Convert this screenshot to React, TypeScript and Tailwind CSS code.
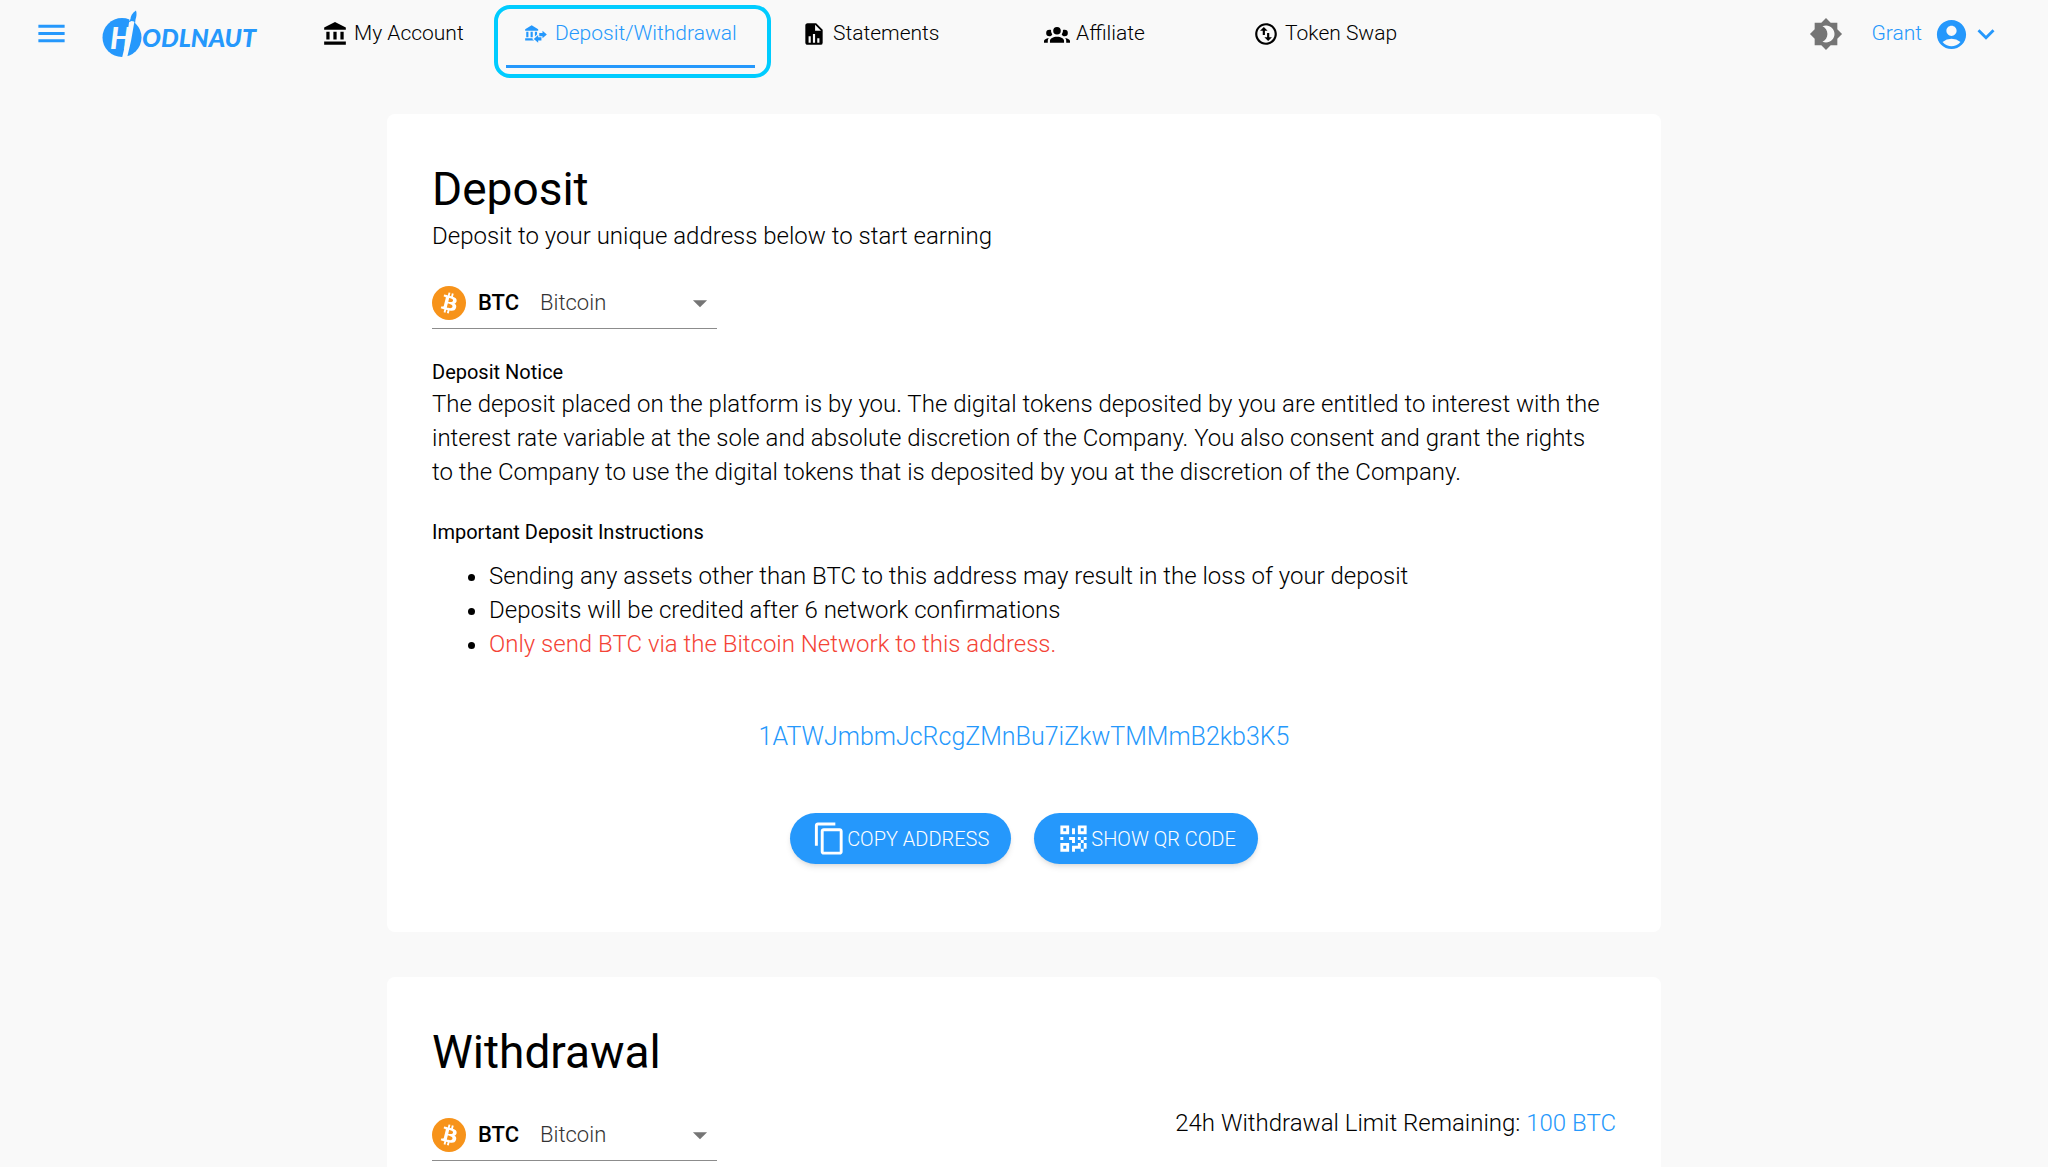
import type { ReactNode } from 'react';
import {
  MdAccountBalance,
  MdAccountCircle,
  MdArrowDropDown,
  MdBrightness4,
  MdContentCopy,
  MdExpandMore,
  MdMenu,
} from 'react-icons/md';

const iconPaths = {
  transfer:
    'M15,14V11H18V9L22,12.5L18,16V14H15M14,7.7V9H2V7.7L8,4L14,7.7M7,10H9V15H7V10M3,10H5V15H3V10M13,10V12.5L11,14.3V10H13M9.1,16L8.5,16.5L10.2,18H2V16H9.1M17,15V18H14V20L10,16.5L14,13V15H17Z',
  fileChart:
    'M13,9H18.5L13,3.5V9M6,2H14L20,8V20A2,2 0 0,1 18,22H6C4.89,22 4,21.1 4,20V4C4,2.89 4.89,2 6,2M7,20H9V14H7V20M11,20H13V12H11V20M15,20H17V16H15V20Z',
  group:
    'M12,5.5A3.5,3.5 0 0,1 15.5,9A3.5,3.5 0 0,1 12,12.5A3.5,3.5 0 0,1 8.5,9A3.5,3.5 0 0,1 12,5.5M5,8C5.56,8 6.08,8.15 6.53,8.42C6.38,9.85 6.8,11.27 7.66,12.38C7.16,13.34 6.16,14 5,14A3,3 0 0,1 2,11A3,3 0 0,1 5,8M19,8A3,3 0 0,1 22,11A3,3 0 0,1 19,14C17.84,14 16.84,13.34 16.34,12.38C17.2,11.27 17.62,9.85 17.47,8.42C17.92,8.15 18.44,8 19,8M5.5,18.25C5.5,16.18 8.41,14.5 12,14.5C15.59,14.5 18.5,16.18 18.5,18.25V20H5.5V18.25M0,20V18.5C0,17.11 1.89,15.94 4.45,15.6C3.86,16.28 3.5,17.22 3.5,18.25V20H0M24,20H20.5V18.25C20.5,17.22 20.14,16.28 19.55,15.6C22.11,15.94 24,17.11 24,18.5V20Z',
  swap: 'M12 2C6.48 2 2 6.48 2 12s4.48 10 10 10 10-4.48 10-10S17.52 2 12 2zm0 18c-4.41 0-8-3.59-8-8s3.59-8 8-8 8 3.59 8 8-3.59 8-8 8zM6.5 9L10 5.5 13.5 9H11v4H9V9H6.5zm11 6L14 18.5 10.5 15H13v-4h2v4h2.5z',
  qr: 'M3,11H5V13H3V11M11,5H13V9H11V5M9,11H13V15H11V13H9V11M15,11H17V13H19V11H21V13H19V15H21V19H19V21H17V19H13V21H11V17H15V15H17V13H15V11M19,19V15H17V19H19M15,3H21V9H15V3M17,5V7H19V5H17M3,3H9V9H3V3M5,5V7H7V5H5M3,15H9V21H3V15M5,17V19H7V17H5Z',
};

function Icon({ d, size = 26 }: { d: string; size?: number }) {
  return (
    <svg className="shrink-0" width={size} height={size} viewBox="0 0 24 24" fill="currentColor" aria-hidden="true">
      <path d={d} />
    </svg>
  );
}

const navLinks = [
  { label: 'My Account', href: '#account', width: 'w-[201px]', icon: <MdAccountBalance size={26} /> },
  { label: 'Deposit/Withdrawal', href: '#deposit', width: 'w-[278px]', icon: <Icon d={iconPaths.transfer} />, active: true },
  { label: 'Statements', href: '#statements', width: 'w-[243px]', icon: <Icon d={iconPaths.fileChart} /> },
  { label: 'Affiliate', href: '#affiliate', width: 'w-[209px]', icon: <Icon d={iconPaths.group} /> },
  { label: 'Token Swap', href: '#swap', width: 'w-[200px]', icon: <Icon d={iconPaths.swap} /> },
];

function Logo() {
  return (
    <svg width="160" height="52" viewBox="0 0 160 52" role="img" aria-label="Hodlnaut">
      <circle cx="20" cy="29.5" r="19.5" fill="#2598fc" />
      <text x="8" y="41" fontSize="30" fontWeight="900" fontStyle="italic" fontFamily="Lato, sans-serif" fill="#f9f9f9">
        H
      </text>
      {/* exhaust trail and rocket */}
      <path d="M20 50 L25 29 L27.500 11 L32.500 13 L29 33 L25 50 Z" fill="#f9f9f9" />
      <path d="M34 2.500 C30 5 28.500 8.500 28.500 11 L26.500 14.500 L29.500 13 L32 13.500 L33 16 L33.500 11.500 C34.500 8.500 35 5.500 34 2.500 Z" fill="#2598fc" />
      <text x="40" y="39" fontSize="25" fontWeight="900" fontStyle="italic" fontFamily="Lato, sans-serif" fill="#2598fc">
        ODLNAUT
      </text>
    </svg>
  );
}

function Header() {
  return (
    <header className="flex h-[68px] items-start px-[34px]">
      <button className="mt-4 text-[#2598fc]" aria-label="Open menu">
        <MdMenu size={35} />
      </button>
      <a href="#home" className="ml-[33px] mt-2">
        <Logo />
      </a>
      <nav className="ml-[43px] flex h-full">
        {navLinks.map((link) => (
          <div key={link.label} className={`relative h-full ${link.width}`}>
            <a
              href={link.href}
              className={`flex h-full items-start gap-1.5 pl-[17px] pt-5 text-[21px] font-light leading-[26px] ${
                link.active ? 'mr-[29px] border-b-3 border-[#2598fc] text-[#2598fc]' : 'text-black'
              }`}
            >
              <span className="mt-px">{link.icon}</span>
              {link.label}
            </a>
            {link.active && (
              <span className="pointer-events-none absolute -left-3 top-[5px] h-[73px] w-[277px] rounded-2xl border-4 border-[#00ccff]" />
            )}
          </div>
        ))}
      </nav>
      <div className="ml-auto mr-[11px] flex h-[68px] items-center text-[21px] font-light text-[#2598fc]">
        <button className="mr-7 text-[#757575]" aria-label="Toggle theme">
          <MdBrightness4 size={34} />
        </button>
        <button className="flex items-center">
          Grant
          <MdAccountCircle size={35} className="ml-3" />
          <MdExpandMore size={34} />
        </button>
      </div>
    </header>
  );
}

function CoinSelect({ id }: { id: string }) {
  return (
    <div className="relative flex h-[43px] w-[285px] items-start border-b border-[#8c8c8c] text-[22px] leading-[34px]">
      <svg width="34" height="34" viewBox="0 0 32 32" aria-hidden="true">
        <circle cx="16" cy="16" r="16" fill="#f7931a" />
        <path
          fill="#fff"
          d="M23.189 14.02c.314-2.096-1.283-3.223-3.465-3.975l.708-2.84-1.728-.43-.69 2.765c-.454-.114-.92-.22-1.385-.326l.695-2.783L15.596 6l-.708 2.839c-.376-.086-.746-.17-1.104-.26l.002-.009-2.384-.595-.46 1.846s1.283.294 1.256.312c.7.175.826.638.805 1.006l-.806 3.235c.048.012.11.03.18.057l-.183-.045-1.13 4.532c-.086.212-.303.531-.793.41.018.025-1.256-.313-1.256-.313l-.858 1.978 2.25.561c.418.105.828.215 1.231.318l-.715 2.872 1.727.43.708-2.84c.472.127.93.245 1.378.357l-.706 2.828 1.728.43.715-2.866c2.948.558 5.164.333 6.097-2.333.752-2.146-.037-3.385-1.588-4.192 1.13-.26 1.98-1.003 2.207-2.538zm-3.95 5.538c-.533 2.147-4.148.986-5.32.695l.95-3.805c1.172.293 4.929.872 4.37 3.11zm.535-5.569c-.487 1.953-3.495.96-4.47.717l.86-3.45c.975.243 4.118.696 3.61 2.733z"
        />
      </svg>
      <label htmlFor={id} className="ml-3 w-[62px] font-medium">
        BTC
      </label>
      <select id={id} className="h-[34px] flex-1 appearance-none bg-transparent font-light text-[#333]">
        <option>Bitcoin</option>
      </select>
      <MdArrowDropDown size={34} className="pointer-events-none absolute right-0 top-0 text-[#757575]" />
    </div>
  );
}

function Card({ title, children }: { title: string; children: ReactNode }) {
  return (
    <section className="rounded-lg bg-white px-[45px] pb-[68px] pt-[45px]">
      <h1 className="text-[46px] leading-[60px]">{title}</h1>
      {children}
    </section>
  );
}

function PillButton({ icon, children }: { icon: ReactNode; children: ReactNode }) {
  return (
    <button className="flex h-[51px] items-center rounded-full bg-[#2598fc] px-[22px] text-[20px] font-light text-white shadow-md">
      {icon}
      {children}
    </button>
  );
}

export default function App() {
  return (
    <div className="min-h-screen bg-[#f9f9f9] font-[Roboto,sans-serif] text-black">
      <Header />
      <main className="mx-auto flex w-full max-w-[1274px] flex-col gap-[45px] pt-[46px]">
        <Card title="Deposit">
          <p className="text-2xl font-light leading-[34px]">Deposit to your unique address below to start earning</p>
          <div className="mt-[33px]">
            <CoinSelect id="deposit-coin" />
          </div>

          <h2 className="mt-7 text-[20px] leading-[30px]">Deposit Notice</h2>
          <p className="pr-2 text-2xl font-light leading-[34px]">
            The deposit placed on the platform is by you. The digital tokens deposited by you are entitled to interest
            with the interest rate variable at the sole and absolute discretion of the Company. You also consent and
            grant the rights to the Company to use the digital tokens that is deposited by you at the discretion of the
            Company.
          </p>

          <h2 className="mt-7 text-[20px] leading-[30px]">Important Deposit Instructions</h2>
          <ul className="mt-3 list-disc pl-[57px] text-2xl font-light leading-[34px]">
            <li>Sending any assets other than BTC to this address may result in the loss of your deposit</li>
            <li>Deposits will be credited after 6 network confirmations</li>
            <li>
              <span className="text-[#f44336]">Only send BTC via the Bitcoin Network to this address.</span>
            </li>
          </ul>

          <p className="mt-14 text-center text-[25px] font-light leading-10 text-[#2598fc]">
            1ATWJmbmJcRcgZMnBu7iZkwTMMmB2kb3K5
          </p>
          <div className="mt-14 flex justify-center gap-[23px]">
            <PillButton icon={<MdContentCopy size={35} />}>COPY ADDRESS</PillButton>
            <PillButton icon={<Icon d={iconPaths.qr} size={35} />}>SHOW QR CODE</PillButton>
          </div>
        </Card>

        <Card title="Withdrawal">
          <div className="mt-6 flex items-start justify-between">
            <div className="mt-3">
              <CoinSelect id="withdrawal-coin" />
            </div>
            <p className="text-2xl font-light leading-[34px]">
              24h Withdrawal Limit Remaining: <span className="text-[#2598fc]">100 BTC</span>
            </p>
          </div>
        </Card>
      </main>
    </div>
  );
}
